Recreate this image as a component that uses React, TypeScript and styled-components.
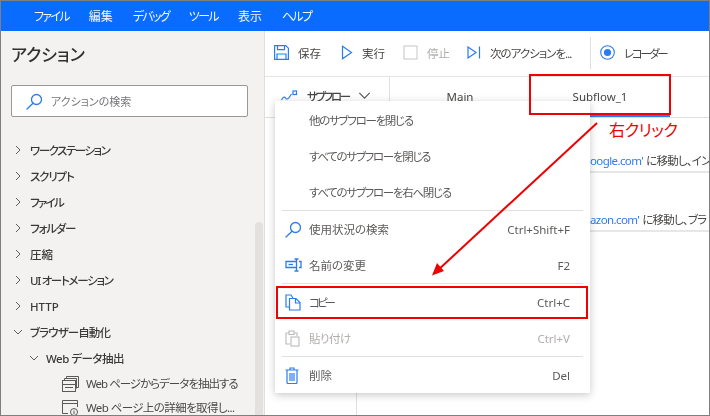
import React from "react";
import styled, { createGlobalStyle } from "styled-components";

const Global = createGlobalStyle`
  html, body { margin: 0; padding: 0; background: #fff; }
  body { font-family: "Noto Sans", "Noto Sans CJK JP", sans-serif; font-feature-settings: "palt"; }
`;

const BLUE = "#2b7cf0";

const Frame = styled.div`
  position: relative;
  box-sizing: border-box;
  width: 710px;
  height: 416px;
  border: 1px solid #7f7f7f;
  display: flex;
  flex-direction: column;
  overflow: hidden;
  background: #fff;
`;

const TitleBar = styled.div`
  height: 30px;
  flex: none;
  background: #0a6cff;
  display: flex;
  align-items: center;
  padding-left: 33px;
  gap: 20px;
  filter: blur(0.3px);
`;

const TitleItem = styled.span<{ $kana?: boolean }>`
  color: #f2f7ff;
  font-size: 12px;
  letter-spacing: ${(p) => (p.$kana ? "-1.7px" : "0")};
  white-space: nowrap;
`;

// kana in the source font run narrower than in Noto, so labels get their own tracking
const Fit = styled.span<{ $s: number }>`
  letter-spacing: ${(p) => p.$s}px;
  white-space: nowrap;
`;

const Body = styled.div`
  flex: 1;
  display: flex;
  min-height: 0;
  filter: blur(0.3px);
`;

const Panel = styled.aside`
  position: relative;
  width: 264px;
  flex: none;
  box-sizing: border-box;
  background: #f3f2f1;
  border-right: 1px solid #e1dfdd;
  padding: 11px 0 0 10px;
  overflow: hidden;
`;

const PanelTitle = styled.h2`
  margin: 0;
  font-size: 17px;
  line-height: 26px;
  font-weight: 500;
  color: #323130;
`;

const SearchBox = styled.div`
  box-sizing: border-box;
  width: 237px;
  height: 32px;
  margin-top: 17px;
  background: #fff;
  border: 1px solid #9a9896;
  border-radius: 2px;
  display: flex;
  align-items: center;
  gap: 8px;
  padding-left: 14px;
  color: #77757a;
  font-size: 11px;
`;

const Tree = styled.ul`
  list-style: none;
  margin: 20px 0 0;
  padding: 0;
`;

const TreeRow = styled.li<{ $depth: number }>`
  height: 26px;
  display: flex;
  align-items: center;
  gap: 7px;
  padding-left: ${(p) => 2 + p.$depth * 16}px;
  font-size: 11.5px;
  font-weight: 500;
  color: #3b3a39;
  white-space: nowrap;
`;

const LeafRow = styled.li`
  height: 24px;
  display: flex;
  align-items: center;
  gap: 7px;
  padding-left: 51px;
  font-size: 11.5px;
  color: #4a4948;
  white-space: nowrap;
`;

const Scrollbar = styled.div`
  position: absolute;
  right: 1px;
  top: 191px;
  bottom: 0;
  width: 8px;
  border-radius: 4px 4px 0 0;
  background: #e3e1df;
`;

const Main = styled.main`
  flex: 1;
  min-width: 0;
  display: flex;
  flex-direction: column;
`;

const Toolbar = styled.div`
  height: 46px;
  flex: none;
  box-sizing: border-box;
  border-bottom: 1px solid #e6e5e4;
  display: flex;
  align-items: center;
  padding: 0 0 2px 9px;
  font-size: 11.5px;
  color: #484644;
`;

const ToolButton = styled.div<{ $disabled?: boolean; $width: number }>`
  width: ${(p) => p.$width}px;
  flex: none;
  display: flex;
  align-items: center;
  gap: 9px;
  white-space: nowrap;
  color: ${(p) => (p.$disabled ? "#b0aeac" : "#484644")};
`;

const ToolDivider = styled.div`
  width: 1px;
  height: 32px;
  background: #e1dfdd;
  margin: 0 9px 0 0;
`;

const TabRow = styled.div`
  height: 41px;
  flex: none;
  box-sizing: border-box;
  border-bottom: 1px solid #e1dfdd;
  display: flex;
  font-size: 11.5px;
  color: #484644;
`;

const SubflowButton = styled.div`
  width: 125px;
  flex: none;
  box-sizing: border-box;
  border-right: 1px solid #e1dfdd;
  display: flex;
  align-items: center;
  padding: 0 0 3px 16px;
  gap: 9px;
  font-weight: 500;
  white-space: nowrap;
`;

const Tab = styled.div<{ $active?: boolean }>`
  width: 140px;
  flex: none;
  box-sizing: border-box;
  display: flex;
  align-items: center;
  justify-content: center;
  border-bottom: 2px solid ${(p) => (p.$active ? BLUE : "transparent")};
`;

const Canvas = styled.div`
  flex: 1;
  display: flex;
  min-height: 0;
`;

const Gutter = styled.div`
  width: 92px;
  flex: none;
  box-sizing: border-box;
  border-right: 1px solid #e1dfdd;
`;

const Steps = styled.div`
  flex: 1;
  min-width: 0;
  padding-top: 15px;
  display: flex;
  flex-direction: column;
  gap: 19px;
  overflow: hidden;
`;

const Step = styled.div`
  height: 40px;
  box-sizing: border-box;
  border-bottom: 2px solid #e8e7e6;
  display: flex;
  align-items: center;
  padding: 16px 0 0 233px;
  font-size: 11.5px;
  color: #484644;
  white-space: nowrap;
  overflow: hidden;
`;

const Link = styled.span`
  color: ${BLUE};
  letter-spacing: -0.6px;
  margin-right: 3px;
`;

const Menu = styled.div`
  position: absolute;
  left: 274px;
  top: 100px;
  width: 315px;
  box-sizing: border-box;
  background: #fff;
  box-shadow: 0 2px 8px rgba(0, 0, 0, 0.22);
  display: flex;
  flex-direction: column;
  padding-top: 1px;
  filter: blur(0.3px);
`;

const MenuRow = styled.div<{ $disabled?: boolean }>`
  height: 36px;
  flex: none;
  display: flex;
  align-items: center;
  padding: 0 20px 0 10px;
  font-size: 11.5px;
  color: ${(p) => (p.$disabled ? "#b0aeac" : "#5c5a58")};
`;

const MenuIcon = styled.span`
  width: 24px;
  flex: none;
  display: flex;
  align-items: center;
  justify-content: flex-start;
`;

const MenuLabel = styled.span<{ $s?: number }>`
  flex: 1;
  white-space: nowrap;
  letter-spacing: ${(p) => p.$s ?? 0}px;
`;

const Shortcut = styled.span`
  white-space: nowrap;
`;

const MenuSep = styled.div`
  height: 1px;
  flex: none;
  background: #e1dfdd;
  margin: 0 7px;
`;

const RedBox = styled.div<{ $l: number; $t: number; $w: number; $h: number }>`
  position: absolute;
  left: ${(p) => p.$l}px;
  top: ${(p) => p.$t}px;
  width: ${(p) => p.$w}px;
  height: ${(p) => p.$h}px;
  box-sizing: border-box;
  border: 2px solid #f00000;
`;

const RedNote = styled.div`
  position: absolute;
  left: 608px;
  top: 118px;
  color: #f00000;
  font-size: 16px;
  line-height: 22px;
  white-space: nowrap;
  letter-spacing: -0.4px;
`;

const ArrowLayer = styled.svg`
  position: absolute;
  left: 0;
  top: 0;
  pointer-events: none;
`;

const Chevron = ({ open, size = 10 }: { open?: boolean; size?: number }) => (
  <svg width={size} height={size} viewBox="0 0 10 10" fill="none" stroke="#605e5c" strokeWidth="1">
    {open ? <path d="M1 3l4 4 4-4" /> : <path d="M3 1l4 4-4 4" />}
  </svg>
);

const SearchIcon = ({ size = 17 }: { size?: number }) => (
  <svg width={size} height={size} viewBox="0 0 17 17" fill="none" stroke={BLUE} strokeWidth="1.3">
    <circle cx="10.5" cy="6.5" r="5" />
    <path d="M7 10.2L1 16" strokeLinecap="round" />
  </svg>
);

const ExtractIcon = () => (
  <svg width="17" height="17" viewBox="0 0 17 17" fill="none" stroke="#5c5a58" strokeWidth="1">
    <path d="M4.5 3.5V1.5h12v11h-2" />
    <path d="M2.5 5.5v-2h12v10" />
    <rect x="0.5" y="5.5" width="13" height="11" />
    <path d="M0.5 9.5h13M3 12.5h8" />
  </svg>
);

const DetailIcon = () => (
  <svg width="17" height="17" viewBox="0 0 17 17" fill="none" stroke="#5c5a58" strokeWidth="1">
    <path d="M6 14.5H0.5v-13h15V8" />
    <path d="M0.5 4.5h15" />
    <circle cx="12" cy="13" r="3.5" fill="#f3f2f1" />
    <path d="M12 12v3M12 10.8v.6" />
  </svg>
);

const SaveIcon = () => (
  <svg width="15" height="15" viewBox="0 0 15 15" fill="none" stroke={BLUE} strokeWidth="1.2">
    <path d="M.6.6h11.2l2.6 2.6v11.2H.6z" />
    <path d="M3.5.6v4h7v-4M3 14.4V9h9v5.4" />
  </svg>
);

const PlayIcon = () => (
  <svg width="12" height="15" viewBox="0 0 12 15" fill="none" stroke={BLUE} strokeWidth="1.2">
    <path d="M1.5 1.2L10.5 7.5 1.5 13.8z" />
  </svg>
);

const StopIcon = () => (
  <svg width="15" height="15" viewBox="0 0 15 15" fill="none" stroke="#c8c6c4" strokeWidth="1">
    <rect x="1" y="1" width="13" height="13" />
  </svg>
);

const NextIcon = () => (
  <svg width="14" height="13" viewBox="0 0 14 13" fill="none" stroke={BLUE} strokeWidth="1.2">
    <path d="M1 1l8 5.5L1 12z" />
    <path d="M12.5 0.5v12" />
  </svg>
);

const RecordIcon = () => (
  <svg width="15" height="15" viewBox="0 0 15 15">
    <circle cx="7.5" cy="7.5" r="6.8" fill="none" stroke={BLUE} strokeWidth="1.1" />
    <circle cx="7.5" cy="7.5" r="3.6" fill={BLUE} />
  </svg>
);

const SubflowIcon = () => (
  <svg width="17" height="11" viewBox="0 0 17 11" fill="none" stroke={BLUE} strokeWidth="1.2">
    <path d="M.5 10c1.500-3 3-3.500 4-2s2.500 1.500 4-1l2-3" />
    <rect x="12" y="1" width="3.500" height="3.500" />
  </svg>
);

const RenameIcon = () => (
  <svg width="17" height="14" viewBox="0 0 17 14" fill="none" stroke={BLUE} strokeWidth="1.3">
    <path d="M11 3.500H1v6h10" />
    <path d="M3.500 6.500H8" />
    <path d="M11.500 1v12M9.500 1h4M9.500 13h4M14 3.500h2v6h-2" />
  </svg>
);

const CopyIcon = () => (
  <svg width="16" height="17" viewBox="0 0 16 17" fill="none" stroke={BLUE} strokeWidth="1.2">
    <path d="M4.500 13H1V1h5l2 3" />
    <path d="M4.500 4.500h6.500l4 4V16H4.500z" />
    <path d="M10.500 4.500V9H15" />
  </svg>
);

const PasteIcon = () => (
  <svg width="15" height="17" viewBox="0 0 15 17" fill="none" stroke="#bdbbb9" strokeWidth="1.1">
    <path d="M5 14H1V3h3M9 3h3v3" />
    <rect x="4" y="1" width="5" height="3.500" />
    <rect x="6" y="7" width="8" height="9" />
  </svg>
);

const TrashIcon = () => (
  <svg width="14" height="17" viewBox="0 0 14 17" fill="none" stroke={BLUE} strokeWidth="1.2">
    <path d="M0.500 3h13M5 3V1h4v2" />
    <path d="M2 3v12.500a1 1 0 0 0 1 1h8a1 1 0 0 0 1-1V3" />
    <path d="M5 6v8M7 6v8M9 6v8" />
  </svg>
);

const menus = [
  { label: "ファイル", kana: true },
  { label: "編集", kana: false },
  { label: "デバッグ", kana: true },
  { label: "ツール", kana: true },
  { label: "表示", kana: false },
  { label: "ヘルプ", kana: true },
];

const groups = [
  { label: "ワークステーション", s: -1.5 },
  { label: "スクリプト", s: -1.2 },
  { label: "ファイル", s: -1.7 },
  { label: "フォルダー", s: -1.2 },
  { label: "圧縮", s: 0 },
  { label: "UI オートメーション", s: -1.3 },
  { label: "HTTP", s: 0 },
];

export default function App() {
  return (
    <Frame>
      <Global />
      <TitleBar>
        {menus.map((m) => (
          <TitleItem key={m.label} $kana={m.kana}>
            {m.label}
          </TitleItem>
        ))}
      </TitleBar>
      <Body>
        <Panel>
          <PanelTitle>アクション</PanelTitle>
          <SearchBox>
            <SearchIcon />
            アクションの検索
          </SearchBox>
          <Tree>
            {groups.map((g) => (
              <TreeRow key={g.label} $depth={0}>
                <Chevron />
                <Fit $s={g.s}>{g.label}</Fit>
              </TreeRow>
            ))}
            <TreeRow $depth={0}>
              <Chevron open />
              <Fit $s={-0.9}>ブラウザー自動化</Fit>
            </TreeRow>
            <TreeRow $depth={1}>
              <Chevron open />
              <Fit $s={-0.5}>Web データ抽出</Fit>
            </TreeRow>
            <LeafRow>
              <ExtractIcon />
              <Fit $s={-1}>Web ページからデータを抽出する</Fit>
            </LeafRow>
            <LeafRow>
              <DetailIcon />
              <Fit $s={-0.6}>Web ページ上の詳細を取得し...</Fit>
            </LeafRow>
          </Tree>
          <Scrollbar />
        </Panel>
        <Main>
          <Toolbar>
            <ToolButton $width={67}>
              <SaveIcon />
              保存
            </ToolButton>
            <ToolButton $width={62}>
              <PlayIcon />
              実行
            </ToolButton>
            <ToolButton $disabled $width={64}>
              <StopIcon />
              停止
            </ToolButton>
            <ToolButton $width={123}>
              <NextIcon />
              <Fit $s={-1}>次のアクションを...</Fit>
            </ToolButton>
            <ToolDivider />
            <ToolButton $width={80}>
              <RecordIcon />
              <Fit $s={-2.4}>レコーダー</Fit>
            </ToolButton>
          </Toolbar>
          <TabRow>
            <SubflowButton>
              <SubflowIcon />
              <Fit $s={-2.2}>サブフロー</Fit>
              <Chevron open size={13} />
            </SubflowButton>
            <Tab>Main</Tab>
            <Tab $active>Subflow_1</Tab>
          </TabRow>
          <Canvas>
            <Gutter />
            <Steps>
              <Step>
                <Link>oogle.com'</Link>
                <Fit $s={-0.8}>に移動し、イン</Fit>
              </Step>
              <Step>
                <Link>azon.com'</Link>
                <Fit $s={-0.8}>に移動し、ブラ</Fit>
              </Step>
            </Steps>
          </Canvas>
        </Main>
      </Body>
      <Menu>
        <MenuRow>
          <MenuIcon />
          <MenuLabel $s={-1.3}>他のサブフローを閉じる</MenuLabel>
        </MenuRow>
        <MenuRow>
          <MenuIcon />
          <MenuLabel $s={-1.3}>すべてのサブフローを閉じる</MenuLabel>
        </MenuRow>
        <MenuRow>
          <MenuIcon />
          <MenuLabel $s={-1.3}>すべてのサブフローを右へ閉じる</MenuLabel>
        </MenuRow>
        <MenuSep />
        <MenuRow>
          <MenuIcon>
            <SearchIcon />
          </MenuIcon>
          <MenuLabel>使用状況の検索</MenuLabel>
          <Shortcut>Ctrl+Shift+F</Shortcut>
        </MenuRow>
        <MenuRow>
          <MenuIcon>
            <RenameIcon />
          </MenuIcon>
          <MenuLabel>名前の変更</MenuLabel>
          <Shortcut>F2</Shortcut>
        </MenuRow>
        <MenuSep />
        <MenuRow>
          <MenuIcon>
            <CopyIcon />
          </MenuIcon>
          <MenuLabel $s={-3}>コピー</MenuLabel>
          <Shortcut>Ctrl+C</Shortcut>
        </MenuRow>
        <MenuRow $disabled>
          <MenuIcon>
            <PasteIcon />
          </MenuIcon>
          <MenuLabel $s={-0.5}>貼り付け</MenuLabel>
          <Shortcut>Ctrl+V</Shortcut>
        </MenuRow>
        <MenuSep />
        <MenuRow>
          <MenuIcon>
            <TrashIcon />
          </MenuIcon>
          <MenuLabel>削除</MenuLabel>
          <Shortcut>Del</Shortcut>
        </MenuRow>
      </Menu>
      <RedBox $l={528} $t={73} $w={142} $h={41} />
      <RedBox $l={275} $t={285} $w={312} $h={33} />
      <RedNote>右クリック</RedNote>
      <ArrowLayer width="708" height="414" viewBox="0 0 708 414">
        <path d="M596 122L436 270" stroke="#f00000" strokeWidth="2" fill="none" />
        <path d="M431 274.500L443 270L436 262z" fill="#f00000" />
      </ArrowLayer>
    </Frame>
  );
}
